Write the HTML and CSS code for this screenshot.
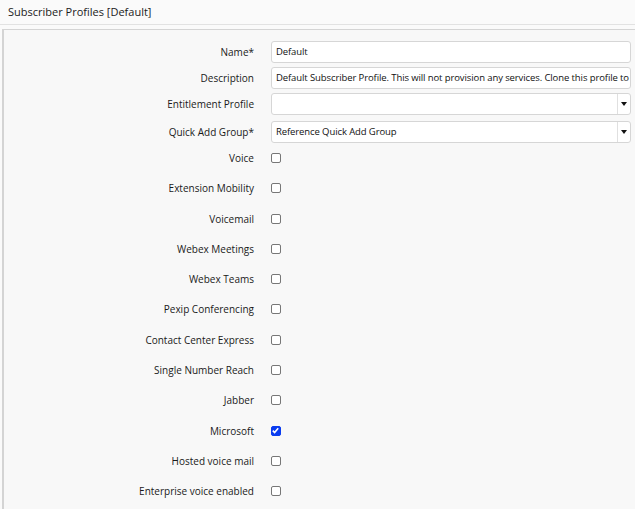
FILE: index.html
```html
<!DOCTYPE html>
<html>
<head>
<meta charset="utf-8">
<link rel="stylesheet" href="styles.css">
</head>
<body>
<div class="header">Subscriber Profiles [Default]</div>
<div class="panel">
  <div class="form">
    <label class="lbl">Name*</label>
    <div class="input">Default</div>
    <label class="lbl">Description</label>
    <div class="input">Default Subscriber Profile. This will not provision any services. Clone this profile to</div>
    <label class="lbl">Entitlement Profile</label>
    <div class="input select"><span class="val"></span><span class="arrow"></span></div>
    <label class="lbl last">Quick Add Group*</label>
    <div class="input select last"><span class="val">Reference Quick Add Group</span><span class="arrow"></span></div>
  </div>
  <div class="checks">
    <div class="lbl">Voice</div><div class="cb"></div>
    <div class="lbl">Extension Mobility</div><div class="cb"></div>
    <div class="lbl">Voicemail</div><div class="cb"></div>
    <div class="lbl">Webex Meetings</div><div class="cb"></div>
    <div class="lbl">Webex Teams</div><div class="cb"></div>
    <div class="lbl">Pexip Conferencing</div><div class="cb"></div>
    <div class="lbl">Contact Center Express</div><div class="cb"></div>
    <div class="lbl">Single Number Reach</div><div class="cb"></div>
    <div class="lbl">Jabber</div><div class="cb"></div>
    <div class="lbl">Microsoft</div><div class="cb checked"><svg width="9" height="9" viewBox="0 0 9 9"><path d="M1.8 4.6 L3.6 6.5 L7.2 2.2" fill="none" stroke="#fff" stroke-width="1.6"/></svg></div>
    <div class="lbl">Hosted voice mail</div><div class="cb"></div>
    <div class="lbl">Enterprise voice enabled</div><div class="cb"></div>
  </div>
</div>
</body>
</html>
```

FILE: styles.css
```css
html, body {
  margin: 0;
  padding: 0;
  background: #fafafa;
  font-family: "Open Sans", "Noto Sans", sans-serif;
  font-size: 10px;
  color: #1a1a1a;
  height: 509px;
  overflow: hidden;
}
.header {
  height: 24px;
  line-height: 24px;
  padding-left: 8px;
  font-size: 11px;
  color: #1a1a1a;
  border-bottom: 1px solid #e2e2e2;
}
.panel {
  box-sizing: border-box;
  margin-top: 4px;
  margin-left: 2px;
  border-left: 2px solid #d4d4d4;
  border-top: 1px solid #d4d4d4;
  background: #f8f8f8;
  height: 480px;
  padding: 11px 4px 0 0;
}
.form {
  display: grid;
  grid-template-columns: 250px 1fr;
  column-gap: 17px;
  row-gap: 4px;
}
.lbl {
  text-align: right;
  align-self: center;
  color: #1a1a1a;
  white-space: nowrap;
}
.lbl.last, .input.last {
  margin-top: 2px;
}
.input {
  height: 20px;
  line-height: 20px;
  border: 1px solid #d6d6d6;
  border-radius: 3px;
  background: #fff;
  padding: 0 4px;
  font-size: 9.5px;
  letter-spacing: -0.1px;
  color: #111;
  white-space: nowrap;
  overflow: hidden;
}
.select {
  display: flex;
  padding: 0 0 0 4px;
}
.select .val {
  flex: 1;
}
.select .arrow {
  width: 12px;
  border-left: 1px solid #e0e0e0;
  position: relative;
}
.select .arrow::after {
  content: "";
  position: absolute;
  left: 3px;
  top: 8px;
  border-left: 3px solid transparent;
  border-right: 3px solid transparent;
  border-top: 4px solid #111;
}
.checks {
  display: grid;
  grid-template-columns: 250px 1fr;
  column-gap: 17px;
  grid-auto-rows: 30.27px;
  margin-top: 0;
  align-items: center;
}
.cb {
  width: 8px;
  height: 8px;
  border: 1px solid #777;
  border-radius: 2px;
  background: #fff;
  display: flex;
}
.cb.checked {
  background: #0a3cf0;
  border-color: #0a3cf0;
}
.cb svg {
  margin: -1px;
}
```
